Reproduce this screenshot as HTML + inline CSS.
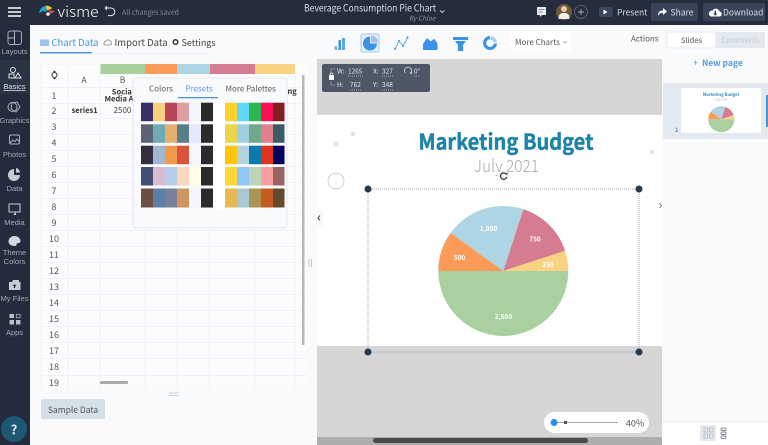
<!DOCTYPE html>
<html><head><meta charset="utf-8"><style>
html,body{margin:0;padding:0;width:768px;height:445px;overflow:hidden;background:#f8fafc}
svg{display:block;filter:blur(.3px)}
text{font-family:"Noto Sans CJK JP","Liberation Sans",sans-serif}
.c{text-anchor:middle}
.s{fill:#a3abb6;font-size:7.5px;text-anchor:middle;font-family:"Liberation Sans",sans-serif}
.n{fill:#555;font-size:9px;text-anchor:middle}
.i{fill:none;stroke:#aab2bd;stroke-width:1}
.g{stroke:#eff1f4;stroke-width:1}
</style></head><body>
<svg width="768" height="445" viewBox="0 0 768 445" xmlns="http://www.w3.org/2000/svg">
<rect width="768" height="445" fill="#f8fafc"/>
<!-- canvas -->
<rect x="317" y="59" width="345" height="386" fill="#d6d6d6"/>
<rect x="317" y="115" width="345" height="231" fill="#fff"/>
<rect x="317" y="437" width="345" height="8" fill="#aeaeae"/>
<rect x="373" y="438" width="215" height="5" rx="2.5" fill="#4a4a4a"/>
<!-- slide content -->
<circle cx="353" cy="134" r="2.5" fill="#e2e2e2"/><circle cx="336" cy="144" r="2.5" fill="#e2e2e2"/><circle cx="652" cy="152" r="2.5" fill="#e6e6e6"/>
<circle cx="336" cy="181" r="8" fill="#fff" stroke="#cfcfcf" stroke-width="1"/>
<text x="506" y="149.500" class="c" font-size="21.500" font-weight="700" fill="#1d84a8" stroke="#1d84a8" stroke-width=".45" textLength="175" lengthAdjust="spacingAndGlyphs">Marketing Budget</text>
<text x="506.500" y="172" class="c" font-size="17" fill="#a9a9a9" textLength="65" lengthAdjust="spacingAndGlyphs" style="font-weight:300">July 2021</text>
<!-- pie -->
<path d="M503.300 271H438.300A65 65 0 0 0 568.300 271Z" fill="#aad0a0"/>
<path d="M503.300 271L450.700 232.800A65 65 0 0 0 438.300 271Z" fill="#fc9a58"/>
<path d="M503.300 271L523.400 209.200A65 65 0 0 0 450.700 232.800Z" fill="#aed5e3"/>
<path d="M503.300 271L565.100 250.900A65 65 0 0 0 523.400 209.200Z" fill="#d67c90"/>
<path d="M503.300 271L568.300 271A65 65 0 0 0 565.100 250.900Z" fill="#f8d384"/>
<g fill="#fff" font-size="6.500" font-weight="700"><text x="488.500" y="231" class="c">1,000</text><text x="535" y="241.500" class="c">750</text><text x="459.500" y="260" class="c">500</text><text x="548" y="267" class="c">250</text><text x="503.500" y="319" class="c">2,500</text></g>
<!-- selection -->
<rect x="368" y="189" width="271" height="163" fill="none" stroke="#9aa0a6" stroke-width="1" stroke-dasharray="1 1"/>
<g fill="#263a52"><circle cx="368" cy="189" r="3.500"/><circle cx="639" cy="189" r="3.500"/><circle cx="368" cy="352" r="3.500"/><circle cx="639" cy="352" r="3.500"/></g>
<circle cx="503.500" cy="176" r="6" fill="#f4f4f4"/>
<path d="M506.500 174.500A3.200 3.200 0 1 0 506.800 177" fill="none" stroke="#2a3444" stroke-width="1.200"/><path d="M505 174.500h2.600v-2.200z" fill="#2a3444"/>
<!-- transform box -->
<rect x="322" y="64" width="108" height="28" rx="2" fill="#4d5766"/>
<g fill="#e4e7eb" font-size="6.500"><text x="337" y="73.500">W:</text><text x="348" y="73.500">1265</text><text x="373" y="73.500">X:</text><text x="382" y="73.500">327</text><text x="414" y="73.500">0°</text><text x="337" y="87">H:</text><text x="350" y="87">762</text><text x="373" y="87">Y:</text><text x="382" y="87">348</text></g>
<g stroke="#c8ccd2" stroke-width=".7" stroke-dasharray="1 1"><path d="M348 76h15M382 76h11M414 76h6M350 90h11M382 90h11"/></g>
<path d="M331 73v-4h4M331 82v3h4" fill="none" stroke="#aab0b9" stroke-width=".6"/>
<rect x="329" y="75" width="5" height="5" rx=".8" fill="#fff"/><path d="M330 75.500v-1a1.500 1.500 0 0 1 3 0v1" fill="none" stroke="#fff" stroke-width=".7"/>
<path d="M411 73a3.500 3.500 0 1 0-5.500 .5" transform="translate(0,-.500)" fill="none" stroke="#dfe3e8" stroke-width=".8"/><path d="M409.500 72.500h3l-1.500 2z" fill="#dfe3e8"/>
<!-- canvas handles -->
<path d="M317 209h4a2 2 0 0 1 2 2v14a2 2 0 0 1-2 2h-4z" fill="#f7f8fa"/><path d="M320 215.500l-2 2.500 2 2.500" fill="none" stroke="#333" stroke-width="1"/>
<path d="M659.500 203l2 2.500-2 2.500" fill="none" stroke="#666" stroke-width=".8"/>
<path d="M309 259v8M311.500 259v8" stroke="#c4c8cd" stroke-width="1"/>
<!-- zoom pill -->
<rect x="544" y="412" width="105" height="21" rx="10.500" fill="#fff"/>
<rect x="554" y="422" width="64" height="1" fill="#a8a8a8"/><circle cx="554" cy="422.500" r="3.500" fill="#2a8df0"/><rect x="564" y="421" width="3" height="3" fill="#555"/>
<text x="635" y="426.500" class="c" font-size="9" fill="#555">40%</text>

<!-- left tabs -->
<g font-size="9.500"><text x="51.500" y="46" fill="#4a94dc">Chart Data</text><text x="114.500" y="46" fill="#444">Import Data</text><text x="181.500" y="46" fill="#444" font-size="9">Settings</text></g>
<rect x="40" y="39.500" width="9" height="6.500" fill="#9cc4ea"/>
<path d="M105 45h5a1.700 1.700 0 0 0 .4-3.300 2.500 2.500 0 0 0-4.700-.3 1.900 1.900 0 0 0-.7 3.600z" fill="none" stroke="#888" stroke-width=".8"/>
<circle cx="175.500" cy="42" r="2.300" fill="none" stroke="#333" stroke-width="1.500"/>
<rect x="40" y="52" width="52" height="1.500" rx=".7" fill="#4a94dc"/>
<rect x="92" y="53" width="120" height="1" fill="#eef0f3"/>
<!-- chart icons -->
<g fill="#3b93e8">
<rect x="334.500" y="46" width="2.500" height="4" fill="#7fb5e6"/><rect x="338.500" y="40" width="2.500" height="10"/><rect x="342" y="38" width="3" height="12" fill="#5ea5e8"/>
<rect x="361" y="34" width="18" height="18" rx="2" fill="#e7effa" stroke="#a7c8ee" stroke-width="1"/>
<path d="M370 36.500v7h7a7 7 0 1 1-7-7z"/><path d="M371 35.500a7 7 0 0 1 7 7h-7z" fill="#9ec4ea"/>
<path d="M423 50V44l4-6 4 3.500 3-3 3.500 5v6.500z"/>
<path d="M453 37h15v3h-15zM455 41h11l-3 4v6h-5v-6z"/>
<path d="M490 36a7 7 0 1 0 7 7.500h-3.200a3.800 3.800 0 1 1-3.800-4.200z"/><path d="M491 36.100a7 7 0 0 1 6 6.100h-3.500a3.800 3.800 0 0 0-2.500-2.500z" fill="#a9cdf0"/>
</g>
<path d="M395 49l4-8 4 5 5-9" fill="none" stroke="#6da9e2" stroke-width="1"/>
<g fill="#3b93e8"><circle cx="395" cy="49" r="1"/><circle cx="399" cy="41" r="1"/><circle cx="403" cy="46" r="1"/><circle cx="407.500" cy="37.500" r="1"/></g>
<rect x="510" y="32" width="61" height="19" fill="#fff"/>
<text x="515" y="45" font-size="8" fill="#555">More Charts</text>
<path d="M563 41l2 2 2-2" fill="none" stroke="#aaa" stroke-width=".8"/>
<text x="631" y="41.500" font-size="8" fill="#555">Actions</text>

<!-- sheet -->
<rect x="41" y="64" width="266" height="321" fill="#fbfcfd"/>
<rect x="100" y="64" width="45" height="10" fill="#a9d09c"/><rect x="145" y="64" width="32" height="10" fill="#fc9a58"/><rect x="177" y="64" width="33" height="10" fill="#aed5e3"/><rect x="210" y="64" width="45" height="10" fill="#d67c90"/><rect x="255" y="64" width="40" height="10" fill="#f8d384"/>
<g class="g">
<path d="M41 87.500H307M41 103.500H307M41 118.500H307M41 134.500H307M41 150.500H307M41 166.500H307M41 182.500H307M41 198.500H307M41 214.500H307M41 230.500H307M41 246.500H307M41 262.500H307M41 278.500H307M41 294.500H307M41 310.500H307M41 326.500H307M41 342.500H307M41 358.500H307M41 375.500H307"/>
<path d="M41 64V388M68 64V388M100 64V388M145 74V388M177 74V388M209.500 74V388M255 74V388M295 74V388M41.500 64H100"/>
</g>
<g><text x="54" y="99" class="n">1</text><text x="54" y="114" class="n">2</text><text x="54" y="130" class="n">3</text><text x="54" y="146" class="n">4</text><text x="54" y="162" class="n">5</text><text x="54" y="178" class="n">6</text><text x="54" y="194" class="n">7</text><text x="54" y="210" class="n">8</text><text x="54" y="226" class="n">9</text><text x="54" y="242" class="n">10</text><text x="54" y="258" class="n">11</text><text x="54" y="274" class="n">12</text><text x="54" y="290" class="n">13</text><text x="54" y="306" class="n">14</text><text x="54" y="322" class="n">15</text><text x="54" y="338" class="n">16</text><text x="54" y="354" class="n">17</text><text x="54" y="370" class="n">18</text><text x="54" y="386" class="n">19</text></g>
<text x="84" y="83" class="c" font-size="8.500" fill="#555">A</text><text x="122.500" y="83" class="c" font-size="8.500" fill="#555">B</text>
<text x="123" y="94.500" class="c" font-size="7.500" font-weight="700" fill="#333">Social</text><text x="119" y="101.500" class="c" font-size="7.500" font-weight="700" fill="#333">Media A</text>
<text x="71.500" y="113" font-size="7.500" font-weight="700" fill="#333">series1</text><text x="122.500" y="113" class="c" font-size="8" fill="#444">2500</text>
<circle cx="54.500" cy="75" r="2.500" fill="none" stroke="#333" stroke-width="1"/><path d="M53 72l3 0-1.500 -1.500zM53 78h3l-1.500 1.500z" fill="#333"/>
<rect x="302" y="75" width="2.500" height="270" fill="#b8b8b8"/>
<rect x="100" y="381" width="28" height="3" rx="1" fill="#ababab"/>
<path d="M169 393h10M169 395.500h10" stroke="#cdd1d6" stroke-width="1"/>
<rect x="41" y="399" width="64" height="20" rx="2" fill="#d5e0e6"/>
<text x="73" y="413" class="c" font-size="8.500" fill="#555">Sample Data</text>

<!-- popover -->
<rect x="133" y="78" width="154" height="150" rx="3" fill="#f8fafc" stroke="#e6e9ed" stroke-width="1"/>
<text x="287.500" y="94" font-size="7.500" font-weight="700" fill="#333">ng</text>
<g font-size="8"><text x="149" y="91.500" fill="#555">Colors</text><text x="185.500" y="91.500" fill="#5b9be0">Presets</text><text x="225.500" y="91.500" fill="#555">More Palettes</text></g>
<rect x="178" y="97" width="40" height="1.300" fill="#4a94dc"/>
<g>
<g><rect x="141" y="102.700" width="12" height="18.500" fill="#3a2f66"/><rect x="153" y="102.700" width="12" height="18.500" fill="#f9d07f"/><rect x="165" y="102.700" width="12" height="18.500" fill="#b8445c"/><rect x="177" y="102.700" width="12" height="18.500" fill="#dd9fa3"/><rect x="189" y="102.700" width="12" height="18.500" fill="#f3f6fd"/><rect x="201" y="102.700" width="12" height="18.500" fill="#2a2a2a"/><rect x="225" y="102.700" width="12" height="18.500" fill="#fdd02b"/><rect x="237" y="102.700" width="12" height="18.500" fill="#62d5fb"/><rect x="249" y="102.700" width="12" height="18.500" fill="#2db64f"/><rect x="261" y="102.700" width="12" height="18.500" fill="#fb0f55"/><rect x="273" y="102.700" width="11.500" height="18.500" fill="#7e2023"/></g>
<g><rect x="141" y="124.300" width="12" height="18.500" fill="#5c6374"/><rect x="153" y="124.300" width="12" height="18.500" fill="#6eabb5"/><rect x="165" y="124.300" width="12" height="18.500" fill="#e4ae6c"/><rect x="177" y="124.300" width="12" height="18.500" fill="#5a7d8a"/><rect x="189" y="124.300" width="12" height="18.500" fill="#e3e9fa"/><rect x="201" y="124.300" width="12" height="18.500" fill="#2b2b2b"/><rect x="225" y="124.300" width="12" height="18.500" fill="#e8d64c"/><rect x="237" y="124.300" width="12" height="18.500" fill="#9ecfe3"/><rect x="249" y="124.300" width="12" height="18.500" fill="#6fa88a"/><rect x="261" y="124.300" width="12" height="18.500" fill="#e0808f"/><rect x="273" y="124.300" width="11.500" height="18.500" fill="#3c5a64"/></g>
<g><rect x="141" y="145.700" width="12" height="18.500" fill="#342f3e"/><rect x="153" y="145.700" width="12" height="18.500" fill="#a1b8d0"/><rect x="165" y="145.700" width="12" height="18.500" fill="#ee9c4a"/><rect x="177" y="145.700" width="12" height="18.500" fill="#d9543f"/><rect x="189" y="145.700" width="12" height="18.500" fill="#f9f6fb"/><rect x="201" y="145.700" width="12" height="18.500" fill="#2b2b2b"/><rect x="225" y="145.700" width="12" height="18.500" fill="#fdc50c"/><rect x="237" y="145.700" width="12" height="18.500" fill="#b3d3dd"/><rect x="249" y="145.700" width="12" height="18.500" fill="#0b7bad"/><rect x="261" y="145.700" width="12" height="18.500" fill="#e1321f"/><rect x="273" y="145.700" width="11.500" height="18.500" fill="#05005e"/></g>
<g><rect x="141" y="167" width="12" height="18.500" fill="#444e75"/><rect x="153" y="167" width="12" height="18.500" fill="#d6bcd2"/><rect x="165" y="167" width="12" height="18.500" fill="#b3cdea"/><rect x="177" y="167" width="12" height="18.500" fill="#fad7bf"/><rect x="189" y="167" width="12" height="18.500" fill="#fffde9"/><rect x="201" y="167" width="12" height="18.500" fill="#2b2b2b"/><rect x="225" y="167" width="12" height="18.500" fill="#fdd734"/><rect x="237" y="167" width="12" height="18.500" fill="#8fc6f7"/><rect x="249" y="167" width="12" height="18.500" fill="#bcd4b5"/><rect x="261" y="167" width="12" height="18.500" fill="#f99ea1"/><rect x="273" y="167" width="11.500" height="18.500" fill="#9b6464"/></g>
<g><rect x="141" y="188.500" width="12" height="19" fill="#6d4f44"/><rect x="153" y="188.500" width="12" height="19" fill="#5d7ea6"/><rect x="165" y="188.500" width="12" height="19" fill="#78809b"/><rect x="177" y="188.500" width="12" height="19" fill="#cf9560"/><rect x="189" y="188.500" width="12" height="19" fill="#f6f5fc"/><rect x="201" y="188.500" width="12" height="19" fill="#2b2b2b"/><rect x="225" y="188.500" width="12" height="19" fill="#e6b955"/><rect x="237" y="188.500" width="12" height="19" fill="#aac8d3"/><rect x="249" y="188.500" width="12" height="19" fill="#ac9552"/><rect x="261" y="188.500" width="12" height="19" fill="#c65a1f"/><rect x="273" y="188.500" width="11.500" height="19" fill="#63492f"/></g>
<rect x="213" y="100" width="12" height="110" fill="#fff"/>
</g>

<!-- right panel -->
<rect x="667" y="32" width="98" height="16" rx="2" fill="#e3e9ef"/><rect x="667" y="32" width="49" height="16" rx="2" fill="#fff" stroke="#dfe4ea" stroke-width=".8"/>
<text x="691.500" y="43" class="c" font-size="7.500" fill="#555">Slides</text><text x="740.500" y="43" class="c" font-size="7.500" fill="#c2cad3">Comments</text>
<text x="693" y="66" font-size="9" fill="#5b9be0">+</text><text x="702" y="66" font-size="8.500" font-weight="700" fill="#5b9be0">New page</text>
<rect x="663" y="83" width="105" height="56" fill="#e3e9ef"/>
<rect x="681" y="88" width="80" height="45" rx="1" fill="#fff"/><rect x="766" y="95" width="2" height="32" fill="#4a94dc"/>
<text x="721" y="96" class="c" font-size="4.200" font-weight="700" fill="#2f8fb5">Marketing Budget</text><text x="721" y="100.500" class="c" font-size="3" fill="#bbb">July 2021</text>
<g transform="translate(721.300 119.300) scale(.2) translate(-503.300 -271)">
<path d="M503.300 271H438.300A65 65 0 0 0 568.300 271Z" fill="#aad0a0"/><path d="M503.300 271L450.700 232.800A65 65 0 0 0 438.300 271Z" fill="#fc9a58"/><path d="M503.300 271L523.400 209.200A65 65 0 0 0 450.700 232.800Z" fill="#aed5e3"/><path d="M503.300 271L565.100 250.900A65 65 0 0 0 523.400 209.200Z" fill="#d67c90"/><path d="M503.300 271L568.300 271A65 65 0 0 0 565.100 250.900Z" fill="#f8d384"/></g>
<text x="675" y="132" font-size="6" font-weight="700" fill="#4a94dc">1</text>
<rect x="663" y="422" width="105" height="23" fill="#fff"/><rect x="663" y="421" width="105" height="1" fill="#eceef1"/>
<rect x="700" y="425" width="31" height="16" rx="2" fill="#e3e9ef"/><rect x="716" y="425" width="15" height="16" rx="2" fill="#fff"/>
<g fill="none" stroke="#aeb9c6" stroke-width=".8"><rect x="704" y="428" width="3.500" height="4"/><rect x="709.500" y="428" width="3.500" height="4"/><rect x="704" y="434" width="3.500" height="4"/><rect x="709.500" y="434" width="3.500" height="4"/></g>
<g fill="none" stroke="#7f8996" stroke-width=".9"><rect x="721" y="428" width="5" height="2.500" rx="1"/><rect x="721" y="432" width="5" height="2.500" rx="1"/><rect x="721" y="436" width="5" height="2.500" rx="1"/></g>

<!-- top bar -->
<rect width="768" height="25" fill="#252c3c"/>
<path d="M8 8h13M8 12h13M8 16h13" stroke="#fff" stroke-width="1.500"/>
<path d="M39 13c1-5 5-8 9-7l-2 6-3-1z" fill="#1ea7c5"/><path d="M46 5.500c3 .3 5 1 6 3l-5 2z" fill="#f6c733"/><path d="M48 10l7 1-4 3z" fill="#e2513f"/><circle cx="48" cy="14" r="1.800" fill="#fff"/>
<text x="57.500" y="17" font-size="15" fill="#fff" textLength="41" lengthAdjust="spacingAndGlyphs" style="font-weight:300">visme</text>
<path d="M107 8h4a3.800 3.800 0 0 1 0 7.600h-3" fill="none" stroke="#e8eaee" stroke-width="1"/><path d="M107 5.500v5l-2.500-2.500z" fill="#e8eaee"/>
<text x="122" y="15" font-size="7.500" fill="#7f8793" textLength="57" lengthAdjust="spacingAndGlyphs">All changes saved</text>
<text x="304" y="11.500" font-size="10" fill="#d8dde5" textLength="132" lengthAdjust="spacingAndGlyphs">Beverage Consumption Pie Chart</text>
<text x="435.500" y="20.500" font-size="6.500" fill="#8d95a1" text-anchor="end" font-style="italic">By Chloe</text>
<path d="M440 10.500l2.200 2 2.200-2" fill="none" stroke="#ccd1d8" stroke-width="1"/>
<path d="M537 7h9v8h-4l-2 2v-2h-3z" fill="#e8eaee"/><path d="M538.500 9.500h6M538.500 12h4" stroke="#666" stroke-width=".7"/>
<circle cx="564" cy="12" r="8" fill="#6b5a3c"/><circle cx="564" cy="9" r="3" fill="#eec7a8"/><path d="M558.500 19c0-5 2-6 5.500-6s5.500 1 5.500 6z" fill="#f4efe6"/>
<circle cx="581" cy="12" r="6.500" fill="none" stroke="#b9bec6" stroke-width=".6" stroke-dasharray="1 .7"/><path d="M578 12h6M581 9v6" stroke="#ccd0d6" stroke-width=".7"/>
<rect x="599" y="7" width="13.500" height="10" rx="1" fill="#3c475c"/><path d="M603.500 9.500v5l4-2.500z" fill="#fff"/>
<text x="617" y="15.500" font-size="8.500" fill="#d8dde5">Present</text>
<rect x="651" y="3" width="47" height="18" rx="2" fill="#39445a"/><rect x="703" y="3" width="62" height="18" rx="2" fill="#39445a"/>
<path d="M658 16c0-4 2-5.500 5-5.500V8l4 3.500-4 3.500v-2.300c-2 0-4 1-5 3.300z" fill="#fff"/>
<text x="670.500" y="15.500" font-size="8.500" fill="#d8dde5">Share</text>
<path d="M711 16.500h8a2.500 2.500 0 0 0 .5-5 3.800 3.800 0 0 0-7-.8 3 3 0 0 0-1.500 5.800z" fill="#fff"/><path d="M714.500 10.500h1.500v3h1.500l-2.200 2.300-2.300-2.300h1.500z" fill="#39445a"/>
<text x="723" y="15.500" font-size="8.500" fill="#d8dde5">Download</text>

<!-- sidebar -->
<rect y="25" width="30" height="420" fill="#232b3c"/>
<rect y="60" width="30" height="33" fill="#2b3445"/>
<text x="14.500" y="54" class="s">Layouts</text><text x="14.500" y="89" class="s" style="fill:#dfe3e8;text-decoration:underline">Basics</text><text x="14.500" y="123" class="s">Graphics</text><text x="14.500" y="157" class="s">Photos</text><text x="14.500" y="191" class="s">Data</text><text x="14.500" y="225" class="s">Media</text><text x="14.500" y="255" class="s">Theme</text><text x="14.500" y="264" class="s">Colors</text><text x="14.500" y="301" class="s">My Files</text><text x="14.500" y="335" class="s">Apps</text>
<g class="i"><rect x="8" y="31" width="13.500" height="13.500" rx="2.500"/><path d="M14.500 31v13.500M8 38h6.500"/></g>
<g class="i" style="stroke:#dfe3e8"><circle cx="13" cy="70" r="2.500"/><rect x="9" y="74" width="5" height="4"/><path d="M15 78l3-5 3 5z"/></g>
<g class="i"><circle cx="12.500" cy="107" r="4.500"/><path d="M12 103l5-1 3 5-4 5-5-3z"/></g>
<g class="i"><rect x="9.500" y="135" width="10" height="9" rx="1.500"/><path d="M10 143l3-3 2 1.500 2-2.500 2.500 3"/></g>
<path d="M14 169a6 6 0 1 0 6 6h-6z" fill="#c8cdd4"/><path d="M16 168a5 5 0 0 1 4 4.500h-4z" fill="#c8cdd4"/>
<g class="i" style="stroke:#c8cdd4"><rect x="9" y="204" width="11" height="8"/></g><path d="M13 215l3-3v3z" fill="#c8cdd4"/>
<path d="M14.500 236c-4 0-6 3-6 5.500s2.500 4.500 6 4.500 1-2 2.500-2.500 3.500-.500 3.500-2.500-2-5-6-5z" fill="#d5d9df"/>
<path d="M9 282h3l1-2h6v2h1.500v8h-11.500z" fill="#c8cdd4"/><path d="M14.500 284l-2 2h1.300v2h1.400v-2h1.300z" fill="#232b3c"/>
<g fill="#b9c0c9"><rect x="9.500" y="314" width="4.500" height="4"/><rect x="9.500" y="320" width="4.500" height="4.500"/><rect x="16" y="320" width="4.500" height="4.500"/></g><rect x="16.300" y="314.300" width="3.800" height="3.500" fill="none" stroke="#b9c0c9" stroke-width=".7"/>
<circle cx="14" cy="429" r="13" fill="#1f5872"/>
<text x="14" y="434.500" class="c" font-size="13" font-weight="700" fill="#dfe6ea">?</text>
</svg>
</body></html>
